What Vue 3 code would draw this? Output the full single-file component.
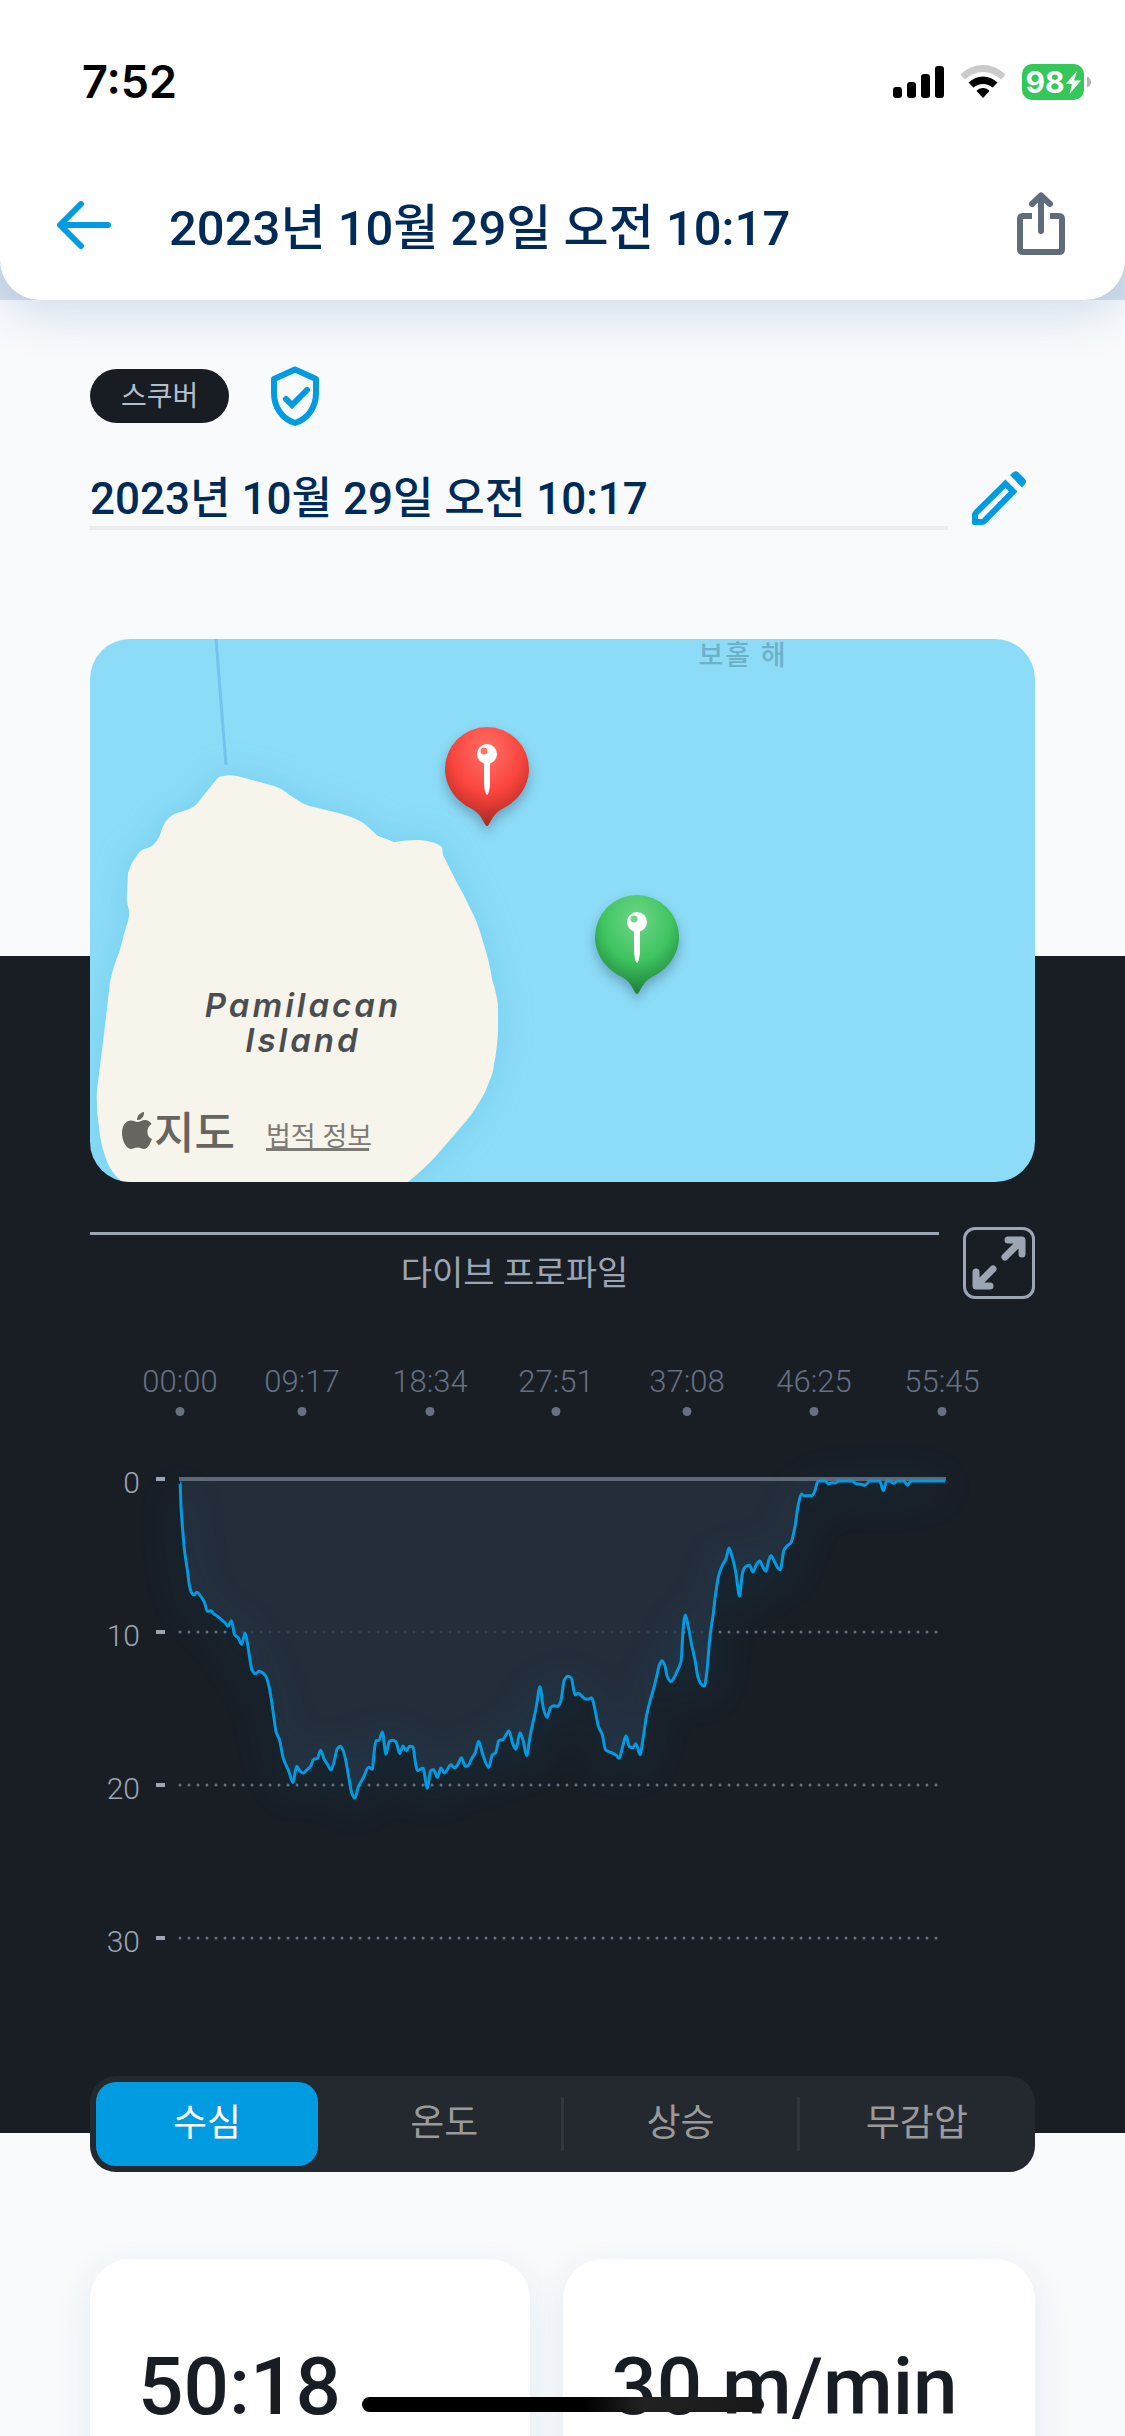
<template>
  <div class="screen">
    <header class="top">
      <div class="top-card">
        <div class="status-bar">
          <span class="clock">7:52</span>
          <div class="status-icons">
            <svg width="51" height="36" viewBox="0 0 51 36">
              <rect x="0" y="23" width="9" height="11" rx="3" />
              <rect x="14" y="18" width="9" height="16" rx="3" />
              <rect x="28" y="10" width="9" height="24" rx="3" />
              <rect x="42" y="2" width="9" height="32" rx="3" />
            </svg>
            <svg width="46" height="36" viewBox="0 0 46 36">
              <path d="M0.5 10.5 Q10 1 23 1 T45.500 10.500 L41 15.500 Q33 8 23 8 T5 15.500 Z" fill="#cacaca" />
              <path d="M8.500 18.500 Q15 12.500 23 12.500 T37.500 18.500 L32.500 23.500 Q28.500 20 23 20 T13.500 23.500 Z" />
              <path d="M16.500 27 Q19 24 23 24 T29.500 27 L23 34 Z" />
            </svg>
            <svg width="69" height="36" viewBox="0 0 69 36">
              <rect x="0" y="0" width="62" height="36" rx="10" fill="#34c759" />
              <path d="M65 12.500 Q69 14 69 18 T65 23.500 Z" fill="#b5b5b5" />
              <text x="23" y="29" class="battery-level" text-anchor="middle">98</text>
              <path d="M55 7 L43.500 20 H50 L47.500 30 L59 16.500 H52 Z" fill="#fff" />
            </svg>
          </div>
        </div>
        <nav class="nav">
          <button class="icon-button" type="button" aria-label="뒤로">
            <svg width="54" height="48" viewBox="0 0 54 48" fill="none" stroke="#009be1" stroke-width="6" stroke-linecap="round" stroke-linejoin="round">
              <path d="M51 24 H4 M24 3 L3 24 L24 45" />
            </svg>
          </button>
          <h1 class="nav-title">{{ diveTitle }}</h1>
          <button class="icon-button" type="button" aria-label="공유">
            <svg width="48" height="66" viewBox="0 0 48 66" fill="none" stroke="#606b7c" stroke-width="6">
              <path d="M15 24 H6 Q3 24 3 27 V57 Q3 60 6 60 H42 Q45 60 45 57 V27 Q45 24 42 24 H33" />
              <path d="M24 39 V4 M15 12 L24 3.500 L33 12" stroke-linecap="round" stroke-linejoin="round" />
            </svg>
          </button>
        </nav>
      </div>
    </header>

    <main class="content">
      <section class="summary">
        <div class="badges">
          <span class="pill">스쿠버</span>
          <svg width="48" height="60" viewBox="0 0 48 60" fill="none" stroke="#009be1" stroke-width="6" stroke-linejoin="round">
            <path d="M24 3.500 L45 13 V27 C45 41 37 53 24 57 C11 53 3 41 3 27 V13 Z" />
            <path d="M15 33 L21 39 L36 24" stroke-linecap="round" stroke-linejoin="miter" />
          </svg>
        </div>
        <div class="title-row">
          <h2 class="dive-name">{{ diveTitle }}</h2>
          <button class="icon-button" type="button" aria-label="편집">
            <svg width="54" height="54" viewBox="0 0 54 54" fill="#009be1">
              <path d="M38 4 L41.500 1 Q43.500 -0.500 46 1 L53 8 Q55 11 53 13 L50 16.500 Z" />
              <path
                d="M33.500 8.500 L45.500 20.500 L15 51.500 Q12.500 54 10 54 H2 Q0 54 0 52 V44 Q0 41.500 2.500 39 Z M33.500 17 L6 44 V48 H10 L37 20.500 Z"
                fill-rule="evenodd"
              />
            </svg>
          </button>
        </div>
      </section>

      <!-- Dive site map -->
      <section class="map">
        <svg class="map-canvas" viewBox="0 0 945 543">
          <defs>
            <radialGradient v-for="pin in pins" :id="pin.id" :key="pin.id" cx="0.5" cy="0.25" r="0.75">
              <stop offset="0" :stop-color="pin.light" />
              <stop offset="0.55" :stop-color="pin.base" />
              <stop offset="1" :stop-color="pin.dark" />
            </radialGradient>
          </defs>
          <rect width="945" height="543" fill="#8cdcf7" />
          <path d="M126 0 L136 126" stroke="#74c3ee" stroke-width="3" />
          <path class="island" :d="islandPath" />
          <text x="653" y="26" class="sea-label" text-anchor="middle">보홀 해</text>
          <text x="213" y="378" class="island-label" text-anchor="middle">Pamilacan</text>
          <text x="213" y="413" class="island-label" text-anchor="middle">Island</text>

          <g transform="translate(32, 473)" fill="#666560">
            <path d="M15 10 C18 10 20 8 23 8 C26 8 28.500 10 29.500 12 C23.500 16 24.500 25 30 27 C28 32 25.500 37 22 37 C19.500 37 18.500 35.500 15.500 35.500 C12.500 35.500 11.500 37 9 37 C4 37 0 28 0 21 C0 13 4.500 8.500 9 8.500 C12 8.500 13.500 10 15 10 Z" />
            <path d="M15 8 C15 4 18 0.500 22 0 C22.500 4.500 19 8.500 15 8 Z" />
          </g>
          <text x="64" y="510" class="map-brand">지도</text>
          <a href="#legal" class="legal">
            <text x="176" y="507">법적 정보</text>
            <rect x="176" y="509" width="103" height="3" />
          </a>

          <g v-for="pin in pins" :key="pin.id" class="pin" :transform="`translate(${pin.x}, ${pin.y})`">
            <path
              d="M0 -42 A42 42 0 0 1 42 0 C42 18 30 33 15 40 C7 44 4 52 1.500 56 Q0 58 -1.500 56 C-4 52 -7 44 -15 40 C-30 33 -42 18 -42 0 A42 42 0 0 1 0 -42 Z"
              :fill="`url(#${pin.id})`"
            />
            <path d="M-3 -7 H3 V16 Q2 25 0 26 Q-2 25 -3 16 Z" fill="#fff" />
            <circle cx="0" cy="-15" r="10" fill="#fff" />
            <circle cx="-3" cy="-18" r="3.500" :fill="pin.light" />
          </g>
        </svg>
      </section>

      <!-- Dive profile chart -->
      <section class="profile">
        <div class="profile-head">
          <h3 class="profile-title">다이브 프로파일</h3>
          <button class="expand" type="button" aria-label="전체 화면">
            <svg width="54" height="54" viewBox="0 0 54 54" fill="none" stroke="#9ba5b4" stroke-width="7" stroke-linecap="round" stroke-linejoin="round">
              <path d="M33 21 L49 5 M36 4 H50 V18" />
              <path d="M21 33 L5 49 M4 36 V50 H18" />
            </svg>
          </button>
        </div>

        <svg class="chart" viewBox="0 0 945 625">
          <g v-for="tick in timeTicks" :key="tick.label">
            <text :x="tick.x" y="37" class="time-label" text-anchor="middle">{{ tick.label }}</text>
            <circle :cx="tick.x" cy="56.500" r="4.500" fill="#667082" />
          </g>
          <g v-for="depth in depthTicks" :key="depth">
            <text x="50" :y="depthY(depth) + 14" class="depth-label" text-anchor="end">{{ depth }}</text>
            <line x1="66" :y1="depthY(depth)" x2="75" :y2="depthY(depth)" stroke="#9ba5b4" stroke-width="4" />
            <line
              v-if="depth > 0"
              x1="90"
              :y1="depthY(depth)"
              x2="850"
              :y2="depthY(depth)"
              stroke="#667082"
              stroke-width="3"
              stroke-linecap="round"
              stroke-dasharray="0 9"
            />
          </g>
          <path :d="areaPath" fill="#273140" fill-opacity="0.8" />
          <line x1="89" y1="124" x2="856" y2="124" stroke="#606877" stroke-width="4" />
          <path class="depth-line" :d="linePath" />
        </svg>
      </section>

      <div class="tabs" role="tablist">
        <button
          v-for="tab in tabs"
          :key="tab"
          type="button"
          role="tab"
          class="tab"
          :class="{ active: tab === activeTab }"
          :aria-selected="tab === activeTab"
          @click="activeTab = tab"
        >
          {{ tab }}
        </button>
      </div>

      <section class="stats">
        <article class="stat">50:18</article>
        <article class="stat">30 m/min</article>
      </section>
    </main>

    <div class="home-indicator"></div>
  </div>
</template>

<script setup>
import { ref, computed } from 'vue'

const diveTitle = '2023년 10월 29일 오전 10:17'

const tabs = ['수심', '온도', '상승', '무감압']
const activeTab = ref('수심')

const pins = [
  { id: 'exit', x: 397, y: 130, light: '#ff7068', base: '#fa453d', dark: '#a92822' },
  { id: 'entry', x: 547, y: 298, light: '#6fd687', base: '#3fc461', dark: '#1e7d38' }
]

const timeTicks = [
  { x: 90, label: '00:00' },
  { x: 212, label: '09:17' },
  { x: 340, label: '18:34' },
  { x: 466, label: '27:51' },
  { x: 597, label: '37:08' },
  { x: 724, label: '46:25' },
  { x: 852, label: '55:45' }
]
const depthTicks = [0, 10, 20, 30]
const depthY = (depth) => 124 + depth * 15.3

const islandPath =
  'M32 543 Q22 534 18 525 Q10 505 9 488 Q6 470 7 451 L14 395 L20 343 Q24 325 29 314 L36 288 Q40 278 39 271 ' +
  'Q36 262 37 255 L38 234 Q41 224 46 218 Q49 212 54 210 Q62 208 64 205 Q68 201 70 196 Q73 185 77 181 Q81 176 87 174 ' +
  'Q98 171 101 169 Q107 166 109 162 L126 141 Q129 137 133 137 Q142 135 151 138 L184 147 Q193 150 198 155 L212 164 ' +
  'Q218 167 224 168 L240 172 Q258 176 268 181 Q274 184 277 187 L288 197 Q297 200 304 203 Q316 201 328 201 ' +
  'Q345 202 352 208 L353 216 L365 240 Q374 256 381 271 Q388 284 393 303 Q399 320 402 340 Q407 356 408 366 L408 392 ' +
  'Q407 412 404 425 Q403 435 399 443 Q396 453 390 462 Q382 476 371 488 L346 517 Q332 532 318 543 Z'

const samples = [
  [300, 128], [303, 200], [308, 270], [314, 335], [322, 390], [328, 435], [334, 457], [342, 465], [351, 457],
  [360, 466], [373, 486], [382, 514], [393, 512], [402, 522], [413, 529], [424, 539], [435, 548], [444, 559],
  [454, 542], [464, 584], [475, 594], [485, 613], [495, 579], [502, 608], [510, 660], [516, 690], [526, 701],
  [537, 694], [547, 698], [557, 708], [566, 735], [574, 778], [582, 835], [589, 878], [598, 898], [610, 955],
  [626, 993], [639, 1028], [650, 979], [659, 992], [670, 999], [682, 988], [691, 980], [701, 958], [712, 955],
  [722, 931], [732, 957], [743, 974], [753, 990], [763, 962], [772, 926], [781, 919], [791, 936], [798, 965],
  [806, 1010], [815, 1058], [824, 1075], [836, 1038], [850, 1013], [866, 982], [877, 988], [882, 940], [888, 902],
  [897, 901], [907, 876], [918, 943], [928, 904], [938, 901], [948, 906], [959, 941], [969, 918], [979, 932],
  [989, 919], [999, 920], [1005, 960], [1012, 992], [1029, 985], [1042, 1045], [1052, 992], [1061, 989],
  [1072, 1012], [1083, 984], [1093, 999], [1113, 974], [1124, 984], [1134, 972], [1144, 953], [1156, 979],
  [1165, 976], [1175, 956], [1186, 938], [1196, 904], [1208, 943], [1226, 982], [1237, 945], [1247, 938],
  [1257, 901], [1268, 899], [1287, 873], [1298, 910], [1308, 928], [1320, 878], [1329, 900], [1340, 947],
  [1350, 890], [1369, 800], [1380, 740], [1390, 805], [1401, 832], [1412, 802], [1422, 797], [1433, 799],
  [1442, 785], [1453, 720], [1464, 709], [1474, 714], [1485, 765], [1495, 760], [1505, 768], [1517, 777],
  [1527, 777], [1535, 773], [1543, 800], [1556, 862], [1566, 882], [1577, 930], [1595, 938], [1608, 945],
  [1617, 955], [1628, 920], [1638, 887], [1648, 920], [1658, 923], [1668, 911], [1680, 944], [1690, 890],
  [1700, 825], [1711, 780], [1722, 742], [1731, 705], [1738, 675], [1746, 662], [1754, 675], [1762, 710],
  [1773, 725], [1783, 712], [1793, 690], [1803, 665], [1808, 590], [1812, 540], [1816, 525], [1824, 555],
  [1834, 610], [1845, 660], [1854, 712], [1864, 733], [1873, 738], [1880, 700], [1890, 590], [1900, 520],
  [1907, 460], [1917, 403], [1927, 377], [1938, 356], [1947, 324], [1957, 352], [1967, 395], [1973, 440],
  [1978, 469], [1988, 397], [1998, 379], [2008, 375], [2019, 396], [2029, 374], [2039, 363], [2049, 382],
  [2058, 394], [2066, 362], [2073, 347], [2084, 366], [2093, 383], [2101, 389], [2112, 330], [2122, 317],
  [2133, 308], [2144, 265], [2154, 200], [2164, 162], [2174, 168], [2184, 167], [2196, 167], [2204, 155],
  [2214, 123], [2235, 123], [2246, 132], [2256, 128], [2266, 129], [2276, 123], [2317, 123], [2328, 131],
  [2342, 133], [2355, 136], [2369, 123], [2399, 123], [2410, 152], [2420, 123], [2430, 123], [2441, 130],
  [2451, 123], [2472, 123], [2482, 136], [2493, 123], [2595, 123]
]

const points = samples.map(([x, y]) => [x / 3 - 10, y / 3 + 85])

// Monotone slope at each point, so the curve never overshoots a sample
const slopes = points.map((p, i) => {
  const prev = points[i - 1]
  const next = points[i + 1]
  if (!prev || !next) return 0
  const a = (p[1] - prev[1]) / (p[0] - prev[0])
  const b = (next[1] - p[1]) / (next[0] - p[0])
  if (a * b <= 0) return 0
  return (2 * a * b) / (a + b)
})

const linePath = computed(() => {
  let d = `M ${points[0].join(',')}`
  for (let i = 1; i < points.length; i++) {
    const [x0, y0] = points[i - 1]
    const [x1, y1] = points[i]
    const dx = (x1 - x0) / 3
    d += ` C ${x0 + dx},${y0 + dx * slopes[i - 1]} ${x1 - dx},${y1 - dx * slopes[i]} ${x1},${y1}`
  }
  return d
})

const areaPath = computed(() => `${linePath.value} L 855,124 L 90,124 Z`)
</script>

<style>
body {
  margin: 0;
  background: #f8fafc;
}
</style>

<style scoped>
.screen {
  height: 100vh;
  display: flex;
  flex-direction: column;
  overflow: hidden;
  background: #f8fafc;
  color: #181d24;
  font-family: Roboto, "Noto Sans CJK KR", sans-serif;
}

svg {
  display: block;
  flex-shrink: 0;
}

h1,
h2,
h3 {
  margin: 0;
}

button {
  border: 0;
  padding: 0;
  background: none;
  font-family: inherit;
  cursor: pointer;
}

.top {
  position: relative;
  z-index: 2;
  flex-shrink: 0;
  background: #d6e0ed;
}

.top-card {
  background: #fff;
  border-radius: 0 0 40px 40px;
  box-shadow: 0 12px 48px rgba(50, 100, 160, 0.2);
}

.status-bar {
  display: flex;
  align-items: center;
  justify-content: space-between;
  height: 100px;
  padding: 32px 34px 0 82px;
}

.clock {
  font: 600 45px/54px Inter, sans-serif;
  color: #000;
}

.status-icons {
  display: flex;
  gap: 16px;
}

.battery-level {
  font: 700 30px Inter, sans-serif;
  fill: #fff;
}

.nav {
  display: flex;
  align-items: center;
  height: 150px;
  padding: 18px 60px 0 57px;
}

.nav-title {
  flex: 1;
  margin-left: 58px;
  padding-top: 8px;
  font-size: 49px;
  line-height: 64px;
  font-weight: 500;
  color: #002a58;
}

.content {
  flex: 1;
  min-height: 0;
  overflow-y: auto;
  scrollbar-width: none;
}

.summary {
  padding: 66px 90px 0;
}

.badges {
  display: flex;
  align-items: center;
  gap: 42px;
}

.pill {
  padding: 2px 31px 0;
  border-radius: 27px;
  background: #181d24;
  color: #b4bfce;
  font-size: 28px;
  line-height: 52px;
}

.title-row {
  display: flex;
  align-items: flex-start;
  gap: 24px;
  margin-top: 45px;
  padding-right: 9px;
}

.dive-name {
  flex: 1;
  padding-top: 2px;
  border-bottom: 4px solid #ebeced;
  font-size: 44px;
  line-height: 53px;
  font-weight: 500;
  color: #002a58;
}

.map {
  position: relative;
  z-index: 1;
  margin: 109px 90px 0;
  border-radius: 40px;
  overflow: hidden;
}

.map-canvas {
  width: 100%;
}

.island {
  fill: #f7f4eb;
  filter: drop-shadow(0 0 16px rgba(60, 180, 225, 0.3));
}

.sea-label {
  font-size: 27px;
  font-weight: 500;
  letter-spacing: 2px;
  fill: #6db0c8;
}

.island-label {
  font: italic 600 33px Inter, sans-serif;
  letter-spacing: 3px;
  fill: #4b4e50;
}

.map-brand {
  font-size: 44px;
  font-weight: 500;
  fill: #666560;
}

.legal {
  font-size: 27px;
  fill: #7c7a75;
}

.pin {
  filter: drop-shadow(0 6px 6px rgba(40, 60, 90, 0.35));
}

.profile {
  margin-top: -226px;
  padding: 271px 90px 153px;
  background: #191e25;
}

.profile-head {
  display: flex;
  align-items: flex-start;
  gap: 24px;
}

.profile-title {
  flex: 1;
  margin-top: 5px;
  padding-top: 16px;
  border-top: 3px solid #9ba5b4;
  font-size: 34px;
  line-height: 44px;
  font-weight: 400;
  text-align: center;
  color: #9ba5b4;
}

.expand {
  display: flex;
  align-items: center;
  justify-content: center;
  box-sizing: border-box;
  width: 72px;
  height: 72px;
  border: 3px solid #9ba5b4;
  border-radius: 12px;
}

.chart {
  width: 100%;
  margin-top: 56px;
  overflow: visible;
}

.time-label {
  font-size: 31px;
  font-weight: 300;
  fill: #667082;
}

.depth-label {
  font-size: 30px;
  font-weight: 300;
  fill: #9ba5b4;
}

.depth-line {
  fill: none;
  stroke: #009be1;
  stroke-width: 3;
  stroke-linejoin: round;
  filter: drop-shadow(0 6px 20px rgba(0, 155, 225, 0.4));
}

.tabs {
  display: grid;
  grid-template-columns: repeat(4, 1fr);
  position: relative;
  z-index: 1;
  height: 96px;
  margin: -57px 90px 0;
  border-radius: 26px;
  background: #24282f;
}

.tab {
  position: relative;
  padding-bottom: 8px;
  font-size: 37px;
  color: #9a9a9a;
}

.tab.active {
  margin: 6px 8px 6px 6px;
  border-radius: 20px;
  background: #009be1;
  color: #fff;
}

.tab:nth-child(n + 3)::before {
  content: "";
  position: absolute;
  left: -2px;
  top: 21px;
  bottom: 21px;
  width: 3px;
  background: #30353d;
}

.stats {
  display: grid;
  grid-template-columns: 14fr 15fr;
  gap: 33px;
  padding: 87px 90px 90px;
}

.stat {
  padding: 80px 48px 120px;
  border-radius: 40px;
  background: #fff;
  box-shadow: 0 12px 36px rgba(50, 120, 170, 0.11);
  font-size: 80px;
  line-height: 96px;
  font-weight: 500;
  white-space: nowrap;
}

.home-indicator {
  position: absolute;
  z-index: 3;
  left: 50%;
  bottom: 24px;
  width: 402px;
  height: 15px;
  margin-left: -201px;
  border-radius: 8px;
  background: linear-gradient(90deg, #000 55%, #222 70%, #181818);
}
</style>
